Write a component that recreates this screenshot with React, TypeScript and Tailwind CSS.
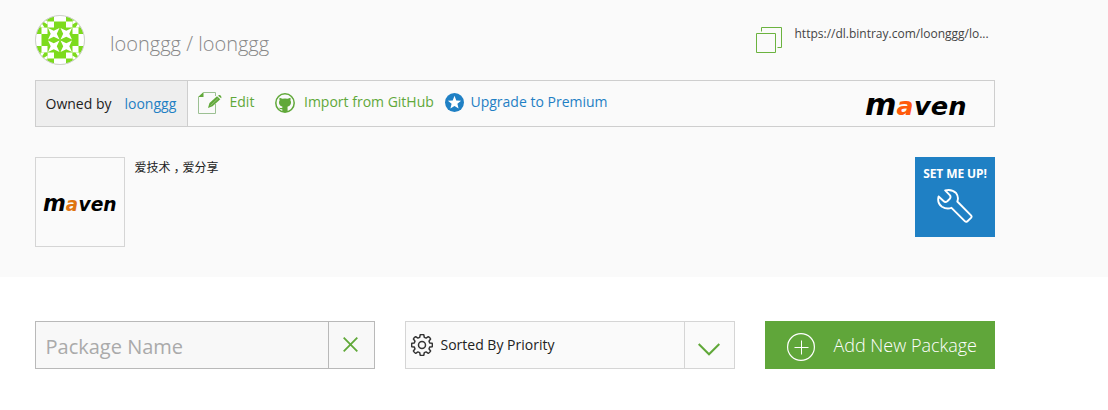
import React from 'react';

function Avatar() {
  return (
    <svg width="50" height="50" viewBox="0 0 50 50" className="shrink-0">
      <defs>
        <clipPath id="round"><circle cx="25" cy="25" r="24.5" /></clipPath>
        <path id="star" d="M.5 .5L6.25 3.2L12 .5L9.3 6.25L12 12L6.25 9.3L.5 12L3.2 6.25Z" fill="#fff" />
        <g id="corner">
          <path d="M0 0H12.5V12.5H0Z" fill="#fff" />
          <path d="M6 0H12.5V6.5ZM0 6V12.5H6.5ZM4 4L12.5 9.5V12.5H9.5Z" fill="#7ddb1d" />
        </g>
        <path id="edge" d="M19 0H31V6.5H19ZM12.5 6.5H19V12.5H12.5ZM31 6.5H37.5V12.5H31Z" fill="#fff" />
      </defs>
      <g clipPath="url(#round)">
        <rect width="50" height="50" fill="#7ddb1d" />
        <use href="#edge" />
        <use href="#edge" transform="rotate(90 25 25)" />
        <use href="#edge" transform="rotate(180 25 25)" />
        <use href="#edge" transform="rotate(270 25 25)" />
        <use href="#corner" />
        <use href="#corner" transform="rotate(90 25 25)" />
        <use href="#corner" transform="rotate(180 25 25)" />
        <use href="#corner" transform="rotate(270 25 25)" />
        <use href="#star" x="12.5" y="12.5" /><use href="#star" x="25" y="12.5" />
        <use href="#star" x="12.5" y="25" /><use href="#star" x="25" y="25" />
      </g>
      <circle cx="25" cy="25" r="24.5" fill="none" stroke="#cfcfcf" />
    </svg>
  );
}

function CopyIcon() {
  return (
    <svg width="26" height="26" viewBox="0 0 26 26" fill="none" stroke="#6bb33f">
      <path d="M.5 6.5H19.5V25.5H.5ZM5.5 4.5V.5H25.5V20.5H21.5" />
    </svg>
  );
}

function EditIcon() {
  return (
    <svg width="24" height="22" viewBox="0 0 24 22">
      <path d="M5.5.5H17.5V4M17.5 12V21.5H.5V5" fill="none" stroke="#9cc093" />
      <path d="M0 5L5.5 0V5Z" fill="#60a839" />
      <path d="M10 16L11.5 11L19 4.3L22.3 7.3L14.5 14.3Z" fill="#60a839" />
      <path d="M20 3.7L21 3Q22 2.5 23 4Q23.8 5.3 23.2 6.2Z" fill="#60a839" />
      <path d="M12.5 13.6L20 6.5" stroke="#b6d5a3" strokeWidth=".6" />
    </svg>
  );
}

function GitHubIcon() {
  return (
    <svg width="20" height="20" viewBox="0 0 20 20">
      <circle cx="10" cy="10" r="9.2" fill="none" stroke="#60a839" strokeWidth="1.5" />
      <path d="M4.6 4.7L7.4 5.7Q10 5.2 12.6 5.7L15.4 4.7Q15.9 6 15.4 7.2Q16.5 9 15.8 11Q15 13.3 12.5 13.7L12.7 19H7.3V16.2Q4.8 16.6 3.8 14.4Q5.4 15.6 7.3 14.8L7.5 13.7Q5 13.2 4.2 11Q3.5 9 4.6 7.2Q4.1 5.8 4.6 4.7Z" fill="#60a839" />
    </svg>
  );
}

function StarBadge() {
  return (
    <svg width="19" height="19" viewBox="0 0 19 19">
      <circle cx="9.5" cy="9.5" r="9.5" fill="#1f80c4" />
      <path d="M9.5 2.8L11.3 7.4L16.1 7.7L12.4 10.8L13.6 15.6L9.5 12.9L5.4 15.6L6.6 10.8L2.9 7.7L7.7 7.4Z" fill="#fff" />
    </svg>
  );
}

function MavenLogo({ small = false }: { small?: boolean }) {
  return small ? (
    <svg width="74" height="18" viewBox="0 0 102 24" preserveAspectRatio="none" className="overflow-visible">
      <MavenWord accent="#df7410" />
    </svg>
  ) : (
    <svg width="102" height="24" viewBox="0 0 102 24" className="overflow-visible">
      <MavenWord accent="#ff5a0a" />
    </svg>
  );
}

function MavenWord({ accent }: { accent: string }) {
  return (
    <text y="21" fontFamily="DejaVu Sans" fontWeight="700" fontStyle="oblique" fontSize="25">
      <tspan x="0" fontSize="31" textLength="31.5" lengthAdjust="spacingAndGlyphs">m</tspan>
      <tspan x="31.5" fill={accent} textLength="17" lengthAdjust="spacingAndGlyphs">a</tspan>
      <tspan x="49" textLength="52.5" lengthAdjust="spacingAndGlyphs">ven</tspan>
    </text>
  );
}

function WrenchIcon() {
  return (
    <svg width="36" height="34" viewBox="0 0 36 34" fill="none" stroke="#fff" strokeWidth="1.9" strokeLinejoin="round">
      <path d="M8.2 1.4Q15-.2 19.2 4.2Q22 8 20.3 12.5L34 26.3Q35.2 27.6 34 28.9L30.2 32.5Q29 33.3 27.8 32.1L14.5 18.8Q9.6 20.5 5 17.7Q-.1 14.2 1.6 7.5L6.5 12Q8.3 13.7 10.3 12.2L12.6 10Q14.2 8.2 13 6.4Z" />
    </svg>
  );
}

function GearIcon() {
  return (
    <svg width="22" height="22" viewBox="0 0 22 22" fill="none" stroke="#333" strokeWidth="1.5" strokeLinejoin="round">
      <path d="M9.2.8Q11 .4 12.8.8L13.3 3.4L15.1 4.1L17.3 2.7Q18.8 3.5 19.6 5L18 7.1L18.7 8.9L21.2 9.3Q21.6 11 21.2 12.7L18.7 13.1L18 14.9L19.6 17Q18.8 18.5 17.3 19.3L15.1 17.9L13.3 18.6L12.8 21.2Q11 21.6 9.2 21.2L8.7 18.6L6.9 17.9L4.7 19.3Q3.2 18.5 2.4 17L4 14.9L3.3 13.1L.8 12.7Q.4 11 .8 9.3L3.3 8.9L4 7.1L2.4 5Q3.2 3.5 4.7 2.7L6.9 4.1L8.7 3.4Z" />
      <circle cx="11" cy="11" r="3.5" />
    </svg>
  );
}

export default function App() {
  return (
    <div className="h-[410px] w-[1108px] overflow-hidden bg-white font-['Open_Sans','Noto_Sans_CJK_SC',sans-serif] text-[14px] text-[#222]">
      <section className="h-[277px] bg-[#fafafa] pl-[35px] pt-[15px]">
        <header className="flex h-[65px] w-[960px]">
          <Avatar />
          <h1 className="ml-[25px] mt-[14px] text-[20px] leading-[30px] font-light whitespace-nowrap text-[#888]">loonggg / loonggg</h1>
          <div className="ml-auto flex w-[239px] pt-3">
            <CopyIcon />
            <span className="ml-[12.5px] -mt-[2px] text-[12px] leading-[18px] whitespace-nowrap text-[#444]">https://dl.bintray.com/loonggg/lo...</span>
          </div>
        </header>

        <div className="flex h-[47px] w-[960px] border border-[#cecece]">
          <div className="flex w-[152px] items-center gap-[13px] border-r border-[#cecece] bg-[#eee] pl-[9.5px] whitespace-nowrap">
            <span>Owned by</span><a className="text-[#1f80c4]">loonggg</a>
          </div>
          <nav className="flex items-start pt-[11px] leading-5 whitespace-nowrap">
            <a className="ml-[9.5px] flex w-[77.5px] gap-2 text-[#60a839]"><EditIcon />Edit</a>
            <a className="flex w-[170px] gap-[9px] text-[#60a839]"><span className="mt-px"><GitHubIcon /></span>Import from GitHub</a>
            <a className="flex gap-[6.5px] text-[#1f80c4]"><span className="mt-px"><StarBadge /></span>Upgrade to Premium</a>
          </nav>
          <div className="mr-[27px] mt-[13px] ml-auto"><MavenLogo /></div>
        </div>

        <div className="mt-[30px] flex w-[960px] items-start">
          <div className="flex size-[90px] items-center justify-center border border-[#d5d5d5] pt-1"><MavenLogo small /></div>
          <p className="ml-[9.5px] mt-[2px] flex text-[12px] leading-[18px]">爱技术<span className="translate-y-[3px] font-['Noto_Sans_CJK_TC',sans-serif]">，</span>爱分享</p>
          <button className="ml-auto flex size-20 flex-col items-center bg-[#1f80c4] pt-2 text-[12px] leading-[18px] font-bold tracking-[-0.1px] whitespace-nowrap text-white">
            SET ME UP!
            <span className="mt-[6px] mr-px"><WrenchIcon /></span>
          </button>
        </div>
      </section>

      <section className="flex pt-11 pl-[35px]">
        <div className="flex h-12 w-[340px] border border-[#b9b9b9] bg-[#f8f8f8]">
          <span className="flex-1 pl-[9.5px] text-[20px] leading-[50px] text-[#aaa]">Package Name</span>
          <div className="flex w-[46px] items-center justify-center border-l border-[#b9b9b9] pr-[2px] pb-px">
            <svg width="15" height="15" viewBox="0 0 15 15" stroke="#60a839" strokeWidth="1.8"><path d="M.7.7L14.3 14.3M14.3.7L.7 14.3" /></svg>
          </div>
        </div>
        <div className="ml-[30px] flex h-12 w-[330px] border border-[#d5d5d5] bg-[#fafafa]">
          <div className="flex flex-1 items-center gap-2 pl-[4.5px]"><GearIcon /><span className="-mt-px">Sorted By Priority</span></div>
          <div className="flex w-[50px] justify-center border-l border-[#d5d5d5] pt-[21px] pr-[2px]">
            <svg width="22" height="13" viewBox="0 0 22 13" fill="none" stroke="#60a839" strokeWidth="2"><path d="M.7 1L11 11.3L21.3 1" /></svg>
          </div>
        </div>
        <button className="ml-[30px] flex h-12 w-[230px] items-center bg-[#60a63a] pl-[22px] text-[18px] font-light whitespace-nowrap text-white">
          <svg width="28" height="28" viewBox="0 0 28 28" fill="none" stroke="#fff" className="mt-1"><circle cx="14" cy="14" r="13.4" strokeWidth="1.2" /><path d="M14.5 7.5V21.5M7.5 14.5H21.5" /></svg>
          <span className="ml-[18.5px] tracking-[-0.01px]">Add New Package</span>
        </button>
      </section>
    </div>
  );
}
